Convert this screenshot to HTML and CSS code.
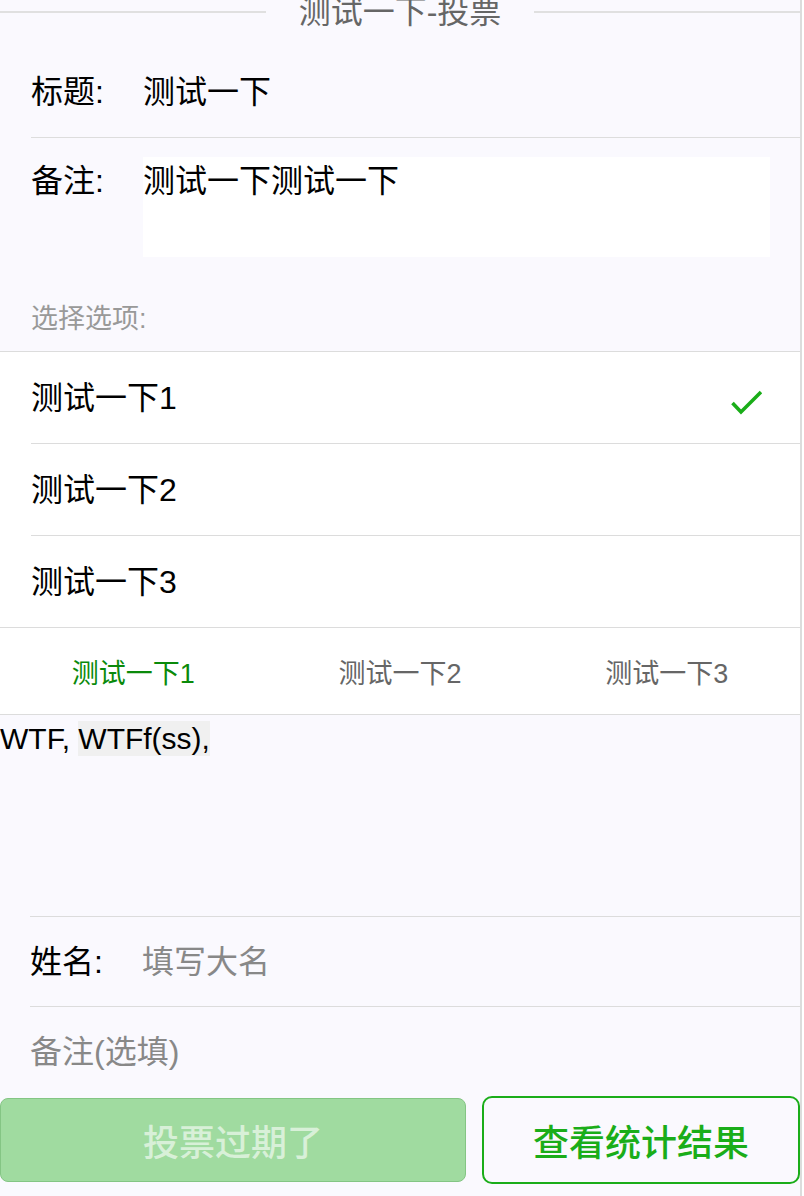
FILE: index.html
```html
<!DOCTYPE html>
<html lang="zh-CN">
<head>
<meta charset="utf-8">
<title>测试一下-投票</title>
<link rel="stylesheet" href="styles.css">
</head>
<body>
<div class="page">
  <div class="legend">
    <span class="legend-line"></span>
    <span class="legend-text">测试一下-投票</span>
    <span class="legend-line"></span>
  </div>

  <div class="cell cell-title">
    <span class="label">标题:</span>
    <span class="value">测试一下</span>
  </div>

  <div class="cell-remark">
    <span class="label label-top">备注:</span>
    <div class="textarea">测试一下测试一下</div>
  </div>

  <div class="section-label">选择选项:</div>

  <div class="options">
    <div class="option">
      <span>测试一下1</span>
      <svg class="check" width="31" height="26" viewBox="0 0 31 26" aria-hidden="true">
        <path d="M1.5 14 L10 23 L30 3" fill="none" stroke="#1aad19" stroke-width="3.6" stroke-linejoin="miter"/>
      </svg>
    </div>
    <div class="option"><span>测试一下2</span></div>
    <div class="option"><span>测试一下3</span></div>
  </div>

  <div class="tabs">
    <div class="tab tab-active">测试一下1</div>
    <div class="tab">测试一下2</div>
    <div class="tab">测试一下3</div>
  </div>

  <div class="content">WTF, <span class="hl">WTFf(ss),</span></div>

  <div class="cell cell-name">
    <span class="label">姓名:</span>
    <span class="value placeholder">填写大名</span>
  </div>

  <div class="cell cell-note">
    <span class="placeholder">备注(选填)</span>
  </div>

  <div class="buttons">
    <div class="btn btn-disabled">投票过期了</div>
    <div class="btn btn-plain">查看统计结果</div>
  </div>
</div>
</body>
</html>
```

FILE: styles.css
```css
html, body {
  margin: 0;
  padding: 0;
  background: #ffffff;
}

body {
  font-family: "Liberation Sans", "Noto Sans CJK SC", sans-serif;
  color: #000;
}

.page {
  width: 800px;
  height: 1196px;
  background: #faf9fe;
  border-right: 2px solid #dcdcdc;
  overflow: hidden;
}

/* fieldset-like title */
.legend {
  display: flex;
  align-items: center;
  height: 24px;
}
.legend-line {
  flex: 1;
  height: 2px;
  background: #e0e0e0;
}
.legend-text {
  padding: 0 33px;
  font-size: 32px;
  line-height: 24px;
  color: #666;
}

/* cells */
.cell {
  display: flex;
  align-items: center;
  margin-left: 31px;
  font-size: 32px;
  line-height: 40px;
}
.label {
  width: 112px;
  flex: none;
}
.cell-title {
  margin-top: 23px;
  height: 90px;
  border-bottom: 1px solid #dddddd;
}

.cell-remark {
  display: flex;
  align-items: flex-start;
  margin-left: 31px;
  padding-top: 19px;
  padding-right: 30px;
  font-size: 32px;
}
.label-top {
  line-height: 48px;
}
.textarea {
  flex: 1;
  height: 100px;
  background: #ffffff;
  line-height: 48px;
}

.section-label {
  margin: 46px 0 16px 31px;
  height: 32px;
  line-height: 32px;
  font-size: 27px;
  color: #999;
}

/* options list */
.options {
  background: #ffffff;
  border-top: 1px solid #dcdcdc;
  border-bottom: 1px solid #dcdcdc;
}
.option {
  display: flex;
  align-items: center;
  justify-content: space-between;
  height: 91px;
  margin-left: 31px;
  padding-right: 38px;
  font-size: 32px;
  line-height: 40px;
}
.option + .option {
  border-top: 1px solid #dcdcdc;
}
.check {
  display: block;
  margin-top: 8px;
}

/* tabs */
.tabs {
  display: grid;
  grid-template-columns: repeat(3, 1fr);
  height: 86px;
  background: #ffffff;
  border-bottom: 1px solid #dcdcdc;
}
.tab {
  display: flex;
  align-items: center;
  justify-content: center;
  font-size: 27px;
  color: #666;
}
.tab-active {
  color: #0a8a0a;
}

/* content */
.content {
  height: 194px;
  padding-top: 7px;
  font-size: 30px;
  color: #000;
}
.hl {
  background: #f0f0f0;
  padding: 1px 0;
}

.cell-name {
  margin-left: 30px;
  height: 89px;
  border-top: 1px solid #dcdcdc;
  border-bottom: 1px solid #dcdcdc;
}
.cell-note {
  margin-left: 30px;
  height: 89px;
}
.placeholder {
  color: #888;
}

/* buttons */
.buttons {
  display: grid;
  grid-template-columns: 466px 1fr;
  column-gap: 16px;
  align-items: center;
  height: 88px;
}
.btn {
  display: flex;
  align-items: center;
  justify-content: center;
  box-sizing: border-box;
  font-size: 36px;
  font-weight: 500;
}
.btn-disabled {
  height: 84px;
  background: #a0dba0;
  border: 1px solid #84c584;
  border-radius: 8px;
  color: rgba(255, 255, 255, 0.6);
}
.btn-plain {
  height: 88px;
  border: 2px solid #1aad19;
  border-radius: 10px;
  color: #1aad19;
}
```
